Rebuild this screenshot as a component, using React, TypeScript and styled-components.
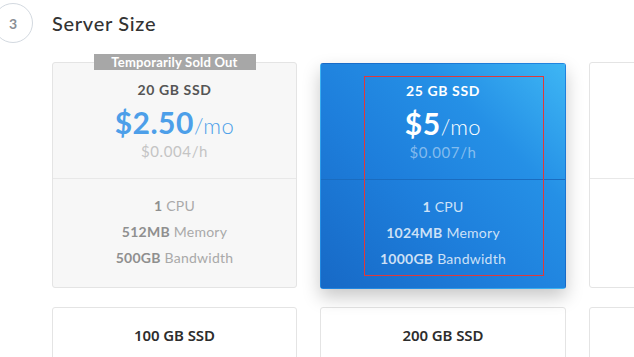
import React from 'react';
import styled, { createGlobalStyle } from 'styled-components';

const GlobalStyle = createGlobalStyle`
  html, body {
    margin: 0;
    padding: 0;
    background: #fff;
    overflow: hidden;
  }
  body {
    font-family: Lato, 'Noto Sans', sans-serif;
  }
`;

interface Plan {
  disk: string;
  price: string;
  hourly: string;
  cpu: string;
  memory: string;
  bandwidth: string;
  soldOut?: boolean;
  selected?: boolean;
}

const plans: Plan[] = [
  { disk: '20 GB SSD', price: '$2.50', hourly: '$0.004/h', cpu: '1', memory: '512MB', bandwidth: '500GB', soldOut: true },
  { disk: '25 GB SSD', price: '$5', hourly: '$0.007/h', cpu: '1', memory: '1024MB', bandwidth: '1000GB', selected: true },
  { disk: '', price: '', hourly: '', cpu: '', memory: '', bandwidth: '' },
];

const Page = styled.div`
  width: 634px;
  height: 357px;
  overflow: hidden;
`;

const Header = styled.div`
  display: flex;
  align-items: center;
  height: 40px;
  padding-top: 3px;
  margin-left: -7px;
`;

const StepCircle = styled.div`
  width: 38px;
  height: 38px;
  border: 1px solid #d3d9e0;
  border-radius: 50%;
  display: flex;
  align-items: center;
  justify-content: center;
  font-size: 14px;
  font-weight: 700;
  color: #8a8f96;
  margin-right: 19px;
`;

const Title = styled.h2`
  margin: 0;
  font-size: 20px;
  font-weight: 500;
  color: #333;
  letter-spacing: 0.7px;
`;

const Grid = styled.div`
  display: grid;
  grid-template-columns: 245px 246px 245px;
  column-gap: 23px;
  row-gap: 18px;
  padding-left: 52px;
  margin-top: 19px;
`;

const Card = styled.div<{ $selected?: boolean; $soldOut?: boolean }>`
  position: relative;
  height: 226px;
  border-radius: 3px;
  box-sizing: border-box;
  display: flex;
  flex-direction: column;
  border: 1px solid ${(p) => (p.$selected ? 'transparent' : '#e4e4e4')};
  background: ${(p) =>
    p.$selected
      ? 'linear-gradient(225deg, #3eb6f4 0%, #2590e6 30%, #1e7fdc 60%, #1769c6 100%)'
      : p.$soldOut
        ? '#f7f7f7'
        : '#fff'};
  box-shadow: ${(p) => (p.$selected ? '0 8px 18px rgba(0,0,0,0.22)' : 'none')};
  margin-top: ${(p) => (p.$selected ? '1px' : '0')};
`;

const Badge = styled.div`
  position: absolute;
  top: -9px;
  left: 50%;
  transform: translateX(-50%);
  width: 162px;
  height: 16px;
  background: #a7a7a7;
  color: #fff;
  font-size: 13px;
  font-weight: 700;
  letter-spacing: 0.2px;
  text-align: center;
  line-height: 16px;
`;

const Top = styled.div<{ $selected?: boolean }>`
  height: 116px;
  display: flex;
  flex-direction: column;
  align-items: center;
  padding-top: 18px;
  box-sizing: border-box;
  border-bottom: 1px solid ${(p) => (p.$selected ? '#1a6cc0' : '#e8e8e8')};
`;

const Disk = styled.div<{ $selected?: boolean }>`
  font-size: 14px;
  font-weight: 700;
  letter-spacing: 0.6px;
  color: ${(p) => (p.$selected ? '#fff' : '#555')};
  line-height: 18px;
`;

const Price = styled.div<{ $selected?: boolean }>`
  margin-top: 7px;
  font-size: 30px;
  font-weight: 700;
  line-height: 32px;
  letter-spacing: 0.5px;
  color: ${(p) => (p.$selected ? '#fff' : '#4d9fe9')};
  span {
    font-size: 22px;
    font-weight: 300;
  }
`;

const Hourly = styled.div<{ $selected?: boolean }>`
  font-size: 15px;
  line-height: 18px;
  letter-spacing: 0.6px;
  font-weight: 400;
  color: ${(p) => (p.$selected ? 'rgba(255,255,255,0.45)' : '#c4c4c4')};
`;

const Features = styled.div`
  display: flex;
  flex-direction: column;
  align-items: center;
  padding-top: 18px;
  gap: 8px;
`;

const Feature = styled.div<{ $selected?: boolean }>`
  font-size: 14px;
  line-height: 18px;
  letter-spacing: 0.25px;
  color: ${(p) => (p.$selected ? 'rgba(255,255,255,0.78)' : '#a9a9a9')};
  b {
    font-weight: 700;
    color: ${(p) => (p.$selected ? 'rgba(255,255,255,0.78)' : '#8f8f8f')};
  }
`;

const Outline = styled.div`
  position: absolute;
  left: 43px;
  top: 12px;
  width: 180px;
  height: 200px;
  border: 1px solid #e0393b;
  box-sizing: border-box;
  pointer-events: none;
`;

const SmallCard = styled.div`
  height: 80px;
  border: 1px solid #e4e4e4;
  border-radius: 3px;
  background: #fff;
  display: flex;
  justify-content: center;
  padding-top: 17px;
  box-sizing: border-box;
`;

const SmallDisk = styled.div`
  font-family: 'Noto Sans', sans-serif;
  font-size: 15px;
  font-weight: 600;
  color: #2d2d2d;
  letter-spacing: -0.1px;
  line-height: 20px;
`;

const PlanCard = ({ plan }: { plan: Plan }) => (
  <Card $selected={plan.selected} $soldOut={plan.soldOut}>
    {plan.soldOut && <Badge>Temporarily Sold Out</Badge>}
    <Top $selected={plan.selected}>
      {plan.disk && (
        <>
          <Disk $selected={plan.selected}>{plan.disk}</Disk>
          <Price $selected={plan.selected}>
            {plan.price}
            <span>/mo</span>
          </Price>
          <Hourly $selected={plan.selected}>{plan.hourly}</Hourly>
        </>
      )}
    </Top>
    {plan.cpu && (
      <Features>
        <Feature $selected={plan.selected}>
          <b>{plan.cpu}</b> CPU
        </Feature>
        <Feature $selected={plan.selected}>
          <b>{plan.memory}</b> Memory
        </Feature>
        <Feature $selected={plan.selected}>
          <b>{plan.bandwidth}</b> Bandwidth
        </Feature>
      </Features>
    )}
    {plan.selected && <Outline />}
  </Card>
);

export default function App() {
  return (
    <Page>
      <GlobalStyle />
      <Header>
        <StepCircle>3</StepCircle>
        <Title>Server Size</Title>
      </Header>
      <Grid>
        {plans.map((p, i) => (
          <PlanCard key={i} plan={p} />
        ))}
        <SmallCard>
          <SmallDisk>100 GB SSD</SmallDisk>
        </SmallCard>
        <SmallCard>
          <SmallDisk>200 GB SSD</SmallDisk>
        </SmallCard>
        <SmallCard />
      </Grid>
    </Page>
  );
}
